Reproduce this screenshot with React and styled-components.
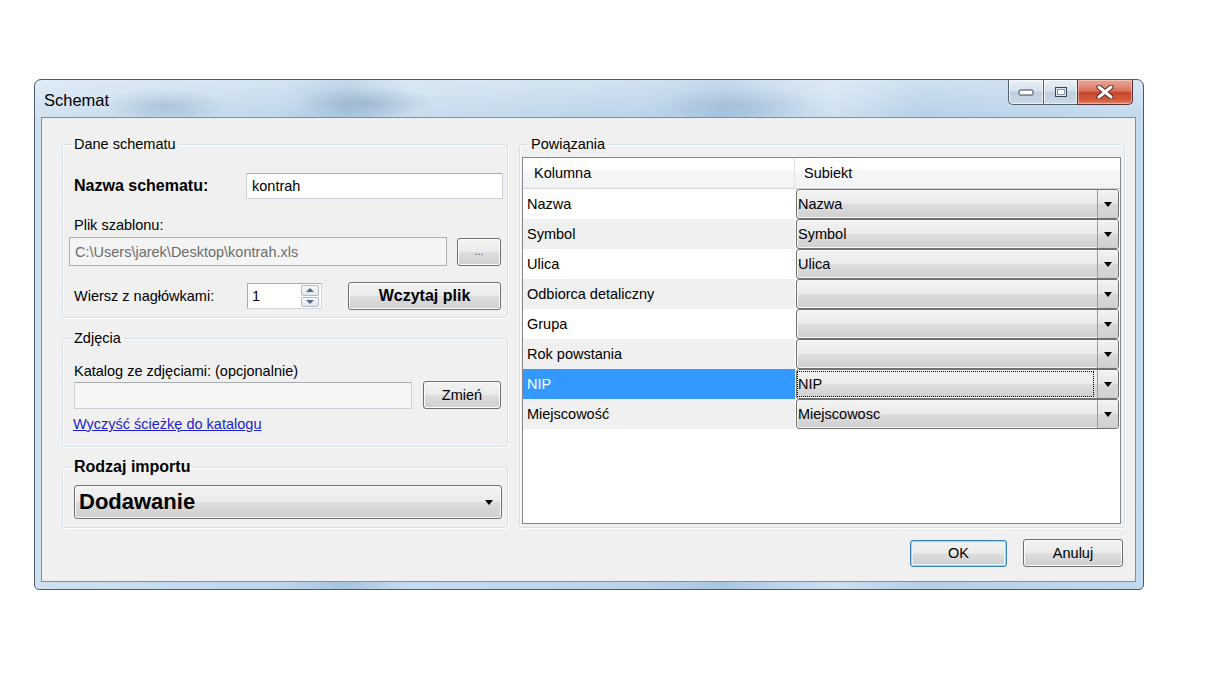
import React from "react"
import styled, { createGlobalStyle } from "styled-components"

const GlobalStyle = createGlobalStyle`
  html, body {
    margin: 0;
    background: #fff;
  }
  body {
    font-family: "Liberation Sans", Arial, sans-serif;
    font-size: 14.5px;
    color: #000;
  }
`

const mappings = [
  { column: "Nazwa", subject: "Nazwa" },
  { column: "Symbol", subject: "Symbol" },
  { column: "Ulica", subject: "Ulica" },
  { column: "Odbiorca detaliczny", subject: "" },
  { column: "Grupa", subject: "" },
  { column: "Rok powstania", subject: "" },
  { column: "NIP", subject: "NIP", selected: true },
  { column: "Miejscowość", subject: "Miejscowosc" },
]

const App = () => (
  <Page>
    <GlobalStyle />
    <Window>
      <TitleBar>
        <Title>Schemat</Title>
        <Controls>
          <CtrlButton $w={35} $left>
            <svg width="16" height="8" viewBox="0 0 16 8">
              <rect x="1" y="2" width="14" height="5" rx="1" fill="#fff" stroke="#3b4550" />
            </svg>
          </CtrlButton>
          <CtrlButton $w={34}>
            <svg width="14" height="12" viewBox="0 0 14 12">
              <rect x="1.5" y="1.5" width="11" height="9" fill="#dfe8f1" stroke="#3b4550" />
              <rect x="3.5" y="3.5" width="7" height="5" fill="#fff" stroke="#8c99a6" />
            </svg>
          </CtrlButton>
          <CloseButton>
            <svg width="18" height="14" viewBox="0 0 18 14">
              <path d="M3 2 L15 12 M15 2 L3 12" stroke="#5a2a22" strokeWidth="5" strokeLinecap="round" />
              <path d="M3 2 L15 12 M15 2 L3 12" stroke="#fff" strokeWidth="3" strokeLinecap="round" />
            </svg>
          </CloseButton>
        </Controls>
      </TitleBar>

      <Client>
        <Body>
          <LeftColumn>
            <Group $pt={21} $pb={7} $pl={6}>
              <Legend $ml={3}>Dane schematu</Legend>
              <NameRow>
                <BoldLabel>Nazwa schematu:</BoldLabel>
                <TextBox>kontrah</TextBox>
              </NameRow>
              <Label $mt={18}>Plik szablonu:</Label>
              <FileRow>
                <TextBox $disabled $h={29}>C:\Users\jarek\Desktop\kontrah.xls</TextBox>
                <Button $w={44} $h={28} $small>...</Button>
              </FileRow>
              <HeaderRow>
                <Label $w={178}>Wiersz z nagłówkami:</Label>
                <Spinner>
                  <SpinValue>1</SpinValue>
                  <SpinButtons>
                    <SpinArrow $up />
                    <SpinArrow />
                  </SpinButtons>
                </Spinner>
                <Button $w={153} $h={28} $bold>Wczytaj plik</Button>
              </HeaderRow>
            </Group>

            <Group $pt={17} $pb={14} $pl={11}>
              <Legend $ml={-2}>Zdjęcia</Legend>
              <Label $flush>Katalog ze zdjęciami: (opcjonalnie)</Label>
              <FolderRow>
                <TextBox $h={27} $w={338} $muted />
                <Button $w={78} $h={28}>Zmień</Button>
              </FolderRow>
              <Link href="#">Wyczyść ścieżkę do katalogu</Link>
            </Group>

            <Group $pt={10} $pb={8} $pl={11}>
              <Legend $ml={-2} $bold>Rodzaj importu</Legend>
              <Combo $h={34} $w={428}>
                <ComboText $big>Dodawanie</ComboText>
                <DropButton $plain />
              </Combo>
            </Group>
          </LeftColumn>

          <Group $pt={5} $pb={3} $pl={2} $pr={3} $grow>
            <Legend $ml={7}>Powiązania</Legend>
            <Grid>
              <GridHeader>
                <HeaderCell $first>Kolumna</HeaderCell>
                <HeaderCell>Subiekt</HeaderCell>
              </GridHeader>
              {mappings.map((m, i) => (
                <GridRow key={m.column}>
                  <NameCell $alt={i % 2 === 1} $selected={m.selected}>
                    {m.column}
                  </NameCell>
                  <ValueCell>
                    <Combo $h={30}>
                      <ComboText $focus={m.selected}>{m.subject}</ComboText>
                      <DropButton />
                    </Combo>
                  </ValueCell>
                </GridRow>
              ))}
            </Grid>
          </Group>
        </Body>

        <Footer>
          <Button $w={97} $h={27} $default>OK</Button>
          <Button $w={100} $h={28}>Anuluj</Button>
        </Footer>
      </Client>
    </Window>
  </Page>
)

export default App

const Page = styled.div`
  box-sizing: border-box;
  height: 691px;
  padding: 79px 0 0 34px;
`

const Window = styled.div`
  box-sizing: border-box;
  width: 1110px;
  height: 511px;
  display: flex;
  flex-direction: column;
  padding: 0 7px 7px 6px;
  border: 1px solid #4d5966;
  border-radius: 7px 7px 5px 5px;
  background:
    linear-gradient(180deg, rgba(255, 255, 255, 0.35), rgba(255, 255, 255, 0) 40px),
    radial-gradient(ellipse 60px 18px at 130px 26px, rgba(120, 150, 180, 0.45), transparent),
    radial-gradient(ellipse 70px 16px at 330px 22px, rgba(110, 140, 170, 0.45), transparent),
    radial-gradient(ellipse 80px 18px at 700px 24px, rgba(120, 150, 180, 0.35), transparent),
    linear-gradient(90deg, #cfe1f0 0%, #bed6eb 22%, #a6c3de 28%, #c7dcee 34%, #b9d2e8 55%, #a9c6e2 62%, #cde0f0 72%, #b5cfe7 80%, #c3d9ed 100%);
`

const TitleBar = styled.div`
  height: 37px;
  display: flex;
  align-items: flex-start;
`

const Title = styled.div`
  flex: 1;
  padding: 10px 0 0 3px;
  font-size: 16.5px;
  line-height: 20px;
  color: #000;
`

const Controls = styled.div`
  display: flex;
  margin-right: 3px;
`

const CtrlButton = styled.div`
  box-sizing: border-box;
  width: ${p => p.$w}px;
  height: 25px;
  display: flex;
  align-items: center;
  justify-content: center;
  border: 1px solid #55616d;
  border-top: none;
  border-right: none;
  border-bottom-left-radius: ${p => (p.$left ? "5px" : "0")};
  background: linear-gradient(#e9f0f7 0%, #d6e2ee 45%, #bfcfdf 50%, #cbd9e6 100%);
  box-shadow: inset 0 0 0 1px rgba(255, 255, 255, 0.6);
`

const CloseButton = styled.div`
  box-sizing: border-box;
  width: 56px;
  height: 25px;
  display: flex;
  align-items: center;
  justify-content: center;
  border: 1px solid #55313a;
  border-top: none;
  border-bottom-right-radius: 5px;
  background: linear-gradient(#e9a998 0%, #d9745d 45%, #c6452c 52%, #d35f41 85%, #e2866a 100%);
  box-shadow: inset 0 0 0 1px rgba(255, 220, 210, 0.5);
`

const Client = styled.div`
  flex: 1;
  display: flex;
  flex-direction: column;
  padding: 18px 10px 0 20px;
  border: 1px solid #7f8f9f;
  background: #f0f0f0;
`

const Body = styled.div`
  display: flex;
  gap: 11px;
`

const LeftColumn = styled.div`
  width: 446px;
  display: flex;
  flex-direction: column;
  gap: 11px;
`

const Group = styled.fieldset`
  box-sizing: border-box;
  margin: 0;
  min-width: 0;
  flex: ${p => (p.$grow ? "1" : "none")};
  display: flex;
  flex-direction: column;
  padding: ${p => p.$pt}px ${p => p.$pr ?? 4}px ${p => p.$pb}px ${p => p.$pl}px;
  border: 1px solid #d5dfe5;
  border-radius: 3px;
  box-shadow: inset 1px 1px 0 #fff, 1px 1px 0 #fff;

  & + & {
    margin-top: 1px;
  }
`

const Legend = styled.legend`
  margin-left: ${p => p.$ml}px;
  padding: 0 2px;
  height: 16px;
  line-height: 16px;
  font-size: ${p => (p.$bold ? "16px" : "14.5px")};
  font-weight: ${p => (p.$bold ? 700 : 400)};
  color: #000;
`

const Label = styled.div`
  box-sizing: border-box;
  ${p => (p.$w ? `width: ${p.$w}px; flex: none;` : "")}
  height: 16px;
  line-height: 16px;
  margin-top: ${p => p.$mt || 0}px;
  padding-left: ${p => (p.$flush ? 0 : 5)}px;
  color: #000;
  white-space: nowrap;
`

const BoldLabel = styled(Label)`
  font-size: 16px;
  font-weight: 700;
`

const NameRow = styled.div`
  display: grid;
  grid-template-columns: 177px 1fr;
  align-items: center;
  height: 26px;
`

const FileRow = styled.div`
  display: flex;
  align-items: center;
  gap: 10px;
  margin-top: 4px;
  padding-right: 2px;
  height: 29px;
`

const HeaderRow = styled.div`
  display: flex;
  align-items: center;
  margin-top: 16px;
  padding-right: 2px;
  height: 28px;

  & > button {
    margin-left: auto;
  }
`

const FolderRow = styled.div`
  display: flex;
  align-items: center;
  gap: 11px;
  margin-top: 2px;
  height: 28px;
`

const TextBox = styled.div`
  box-sizing: border-box;
  height: ${p => p.$h || 26}px;
  ${p => (p.$w ? `width: ${p.$w}px;` : "flex: 1;")}
  display: flex;
  align-items: center;
  padding-left: 5px;
  border: 1px solid ${p => (p.$disabled ? "#afafaf" : "#c9d0d8")};
  border-top-color: ${p => (p.$disabled ? "#afafaf" : "#abadb3")};
  background: ${p => (p.$disabled ? "#f4f4f4" : p.$muted ? "#f5f5f5" : "#fff")};
  color: ${p => (p.$disabled ? "#6d6d6d" : "#000")};
  white-space: nowrap;
  overflow: hidden;
`

const Spinner = styled.div`
  box-sizing: border-box;
  width: 75px;
  height: 26px;
  display: flex;
  border: 1px solid #abadb3;
  border-right-color: #d0d6dc;
  border-bottom-color: #d0d6dc;
  background: #fff;
`

const SpinValue = styled.div`
  flex: 1;
  padding-left: 4px;
  line-height: 24px;
`

const SpinButtons = styled.div`
  width: 18px;
  margin: 1px 2px 1px 0;
  display: flex;
  flex-direction: column;
  gap: 1px;
`

const SpinArrow = styled.div`
  flex: 1;
  display: flex;
  align-items: center;
  justify-content: center;
  border: 1px solid #b4bcc5;
  border-radius: 2px;
  background: linear-gradient(#f6f8fa, #e2e7ec);

  &::after {
    content: "";
    border-left: 4px solid transparent;
    border-right: 4px solid transparent;
    ${p => (p.$up ? "border-bottom: 4px solid #4d6a8a;" : "border-top: 4px solid #4d6a8a;")}
  }
`

const Button = styled.button`
  box-sizing: border-box;
  width: ${p => p.$w}px;
  height: ${p => p.$h}px;
  padding: 0;
  flex: none;
  border: 1px solid ${p => (p.$default ? "#3c7fb1" : "#707070")};
  border-radius: 3px;
  background: linear-gradient(#f2f2f2 0%, #ebebeb 48%, #dddddd 52%, #cfcfcf 100%);
  box-shadow: ${p =>
    p.$default ? "inset 0 0 0 1px #9fd5f2, inset 0 0 0 2px #e4f2fa" : "inset 0 0 0 1px #fbfbfb"};
  font-family: inherit;
  font-size: ${p => (p.$bold ? "16px" : p.$small ? "11px" : "14.5px")};
  font-weight: ${p => (p.$bold ? 700 : 400)};
  color: ${p => (p.$small ? "#555" : "#000")};
  line-height: 1;
`

const Link = styled.a`
  margin-top: 7px;
  margin-left: -1px;
  height: 16px;
  line-height: 16px;
  color: #1e1ecc;
  text-decoration: underline;
  white-space: nowrap;
  align-self: flex-start;
`

const Combo = styled.div`
  box-sizing: border-box;
  height: ${p => p.$h}px;
  ${p => (p.$w ? `width: ${p.$w}px;` : "")}
  display: flex;
  align-items: stretch;
  border: 1px solid #707070;
  border-radius: 3px;
  background: linear-gradient(#f2f2f2 0%, #ebebeb 48%, #dddddd 52%, #cfcfcf 100%);
  box-shadow: inset 0 0 0 1px #f8f8f8;
`

const ComboText = styled.span`
  flex: 1;
  display: flex;
  align-items: center;
  margin: ${p => (p.$focus ? "2px 4px 2px 1px" : "0")};
  padding-left: ${p => (p.$big ? 4 : p.$focus ? 0 : 1)}px;
  outline: ${p => (p.$focus ? "1px dotted #000" : "none")};
  font-size: ${p => (p.$big ? "22px" : "14.5px")};
  font-weight: ${p => (p.$big ? 700 : 400)};
  white-space: nowrap;
`

const DropButton = styled.span`
  width: ${p => (p.$plain ? 24 : 20)}px;
  display: flex;
  align-items: center;
  justify-content: center;
  border-left: ${p => (p.$plain ? "none" : "1px solid #9a9a9a")};
  ${p => (p.$plain ? "" : "background: linear-gradient(#f4f4f4, #e6e6e6 50%, #d8d8d8 50%, #d0d0d0);")}
  border-radius: 0 2px 2px 0;

  &::after {
    content: "";
    border-left: 4px solid transparent;
    border-right: 4px solid transparent;
    border-top: 5px solid #000;
  }
`

const Grid = styled.div`
  flex: 1;
  display: flex;
  flex-direction: column;
  border: 1px solid #828790;
  background: #fff;
`

const GridHeader = styled.div`
  display: flex;
  height: 30px;
  border-bottom: 1px solid #d5d5d5;
  background: linear-gradient(#ffffff 0%, #ffffff 40%, #f7f8fa 41%, #f1f2f4 100%);
`

const HeaderCell = styled.div`
  ${p => (p.$first ? "width: 272px; flex: none; padding-left: 11px; border-right: 1px solid #e2e3e5;" : "flex: 1; padding-left: 9px;")}
  box-sizing: border-box;
  display: flex;
  align-items: center;
`

const GridRow = styled.div`
  display: flex;
  height: 30px;
`

const NameCell = styled.div`
  box-sizing: border-box;
  width: 272px;
  flex: none;
  display: flex;
  align-items: center;
  padding-left: 4px;
  background: ${p => (p.$selected ? "#3399ff" : p.$alt ? "#f0f0f0" : "#fff")};
  color: ${p => (p.$selected ? "#fff" : "#000")};
`

const ValueCell = styled.div`
  flex: 1;
  padding: 0 1px 0 1px;
  & > div {
    height: 30px;
  }
`

const Footer = styled.div`
  display: flex;
  justify-content: flex-end;
  align-items: center;
  gap: 16px;
  margin-top: 11px;
  padding-right: 2px;
`
